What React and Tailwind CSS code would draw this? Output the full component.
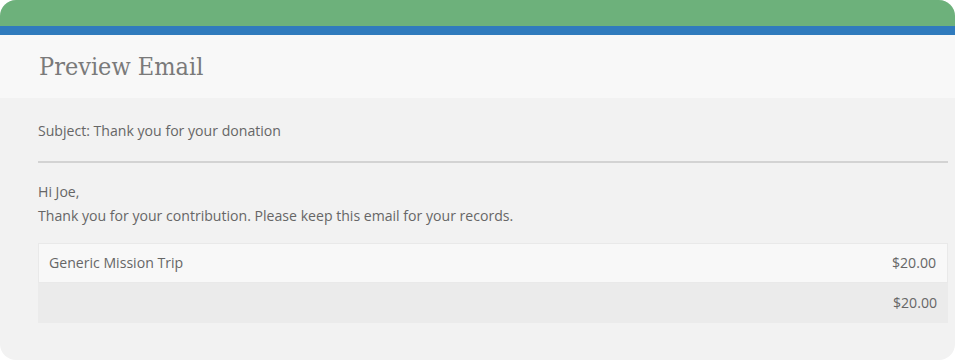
export default function App() {
  const rows = [
    { label: 'Generic Mission Trip', amount: '$20.00' },
  ]

  return (
    <div className="w-[955px] h-[360px] bg-white">
      <div className="h-full rounded-[16px] overflow-hidden bg-[#f2f2f2] flex flex-col">
        {/* Top bars */}
        <div className="h-[26px] bg-[#6db17b]" />
        <div className="h-[9px] bg-[#307bbd]" />

        {/* Header */}
        <div className="h-[63px] bg-[#f8f8f8] flex items-center px-[39px]">
          <h1 className="text-[25px] text-[#7a7a7a] font-['DejaVu_Serif_Condensed','DejaVu_Serif',serif] [font-stretch:condensed]">
            Preview Email
          </h1>
        </div>

        {/* Body */}
        <div className="flex-1 px-[38px] pr-[7px] font-['Segoe_UI','Open_Sans',sans-serif] text-[14.1px] text-[#666]">
          <div className="h-[65px] pt-[3px] flex items-center border-b-2 border-[#d3d3d3]">
            Subject: Thank you for your donation
          </div>

          <div className="pt-[17px] leading-[24px]">
            <p>Hi Joe,</p>
            <p>Thank you for your contribution. Please keep this email for your records.</p>
          </div>

          <div className="mt-[15px]">
            {rows.map((row) => (
              <div
                key={row.label}
                className="h-[40px] flex items-center justify-between px-[10px] pr-[11px] bg-[#f8f8f8] border border-[#e9e9e9]"
              >
                <span>{row.label}</span>
                <span>{row.amount}</span>
              </div>
            ))}
            <div className="h-[40px] flex items-center justify-end px-[11px] bg-[#ebebeb]">
              <span>$20.00</span>
            </div>
          </div>
        </div>
      </div>
    </div>
  )
}
